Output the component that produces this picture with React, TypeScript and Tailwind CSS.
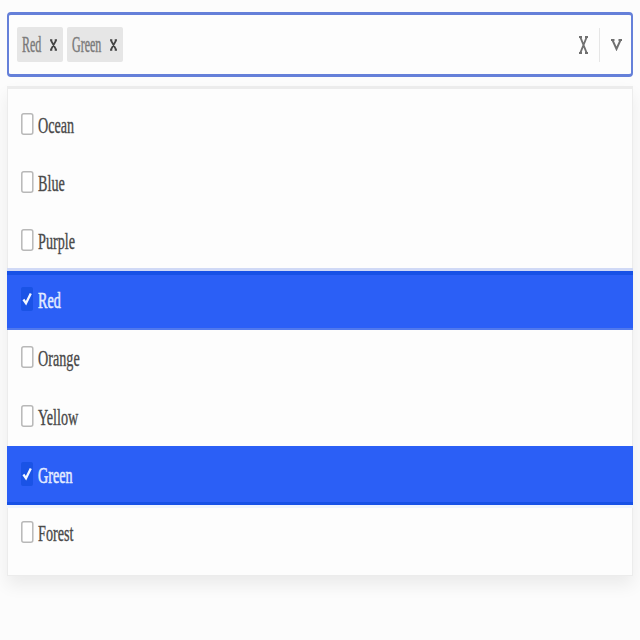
const options = ['Ocean', 'Blue', 'Purple', 'Red', 'Orange', 'Yellow', 'Green', 'Forest'];
const selected = ['Red', 'Green'];

const selectedEdges: Record<string, string> = {
  Red: 'shadow-[0_-3px_0_#d0d9f6,inset_0_4px_0_#1751e6,inset_0_-2px_0_#5179ed]',
  Green: 'shadow-[0_3px_0_#eef4ff,inset_0_-3px_0_#1751e6]',
};

function Chip({ label, width, textWidth }: { label: string; width: string; textWidth: string }) {
  return (
    <div className={`flex h-[35px] items-center rounded-[2px] bg-[#e6e6e6] pl-[5px] ${width}`}>
      <span className={`${textWidth} shrink-0`}>
        <span className="inline-block origin-left scale-x-50 whitespace-nowrap text-[24px] leading-[35px] text-[#707070] [-webkit-text-stroke:0.5px_#8a8a8a]">
          {label}
        </span>
      </span>
      <svg className="h-[12px] w-[7px] shrink-0" viewBox="0 0 7 12" fill="none" stroke="#444" strokeWidth="1.7">
        <path d="M1 1.5 6 10.5M6 1.5 1 10.5M0 1h2.3M4.7 1H7M0 11h2.3M4.7 11H7" />
      </svg>
    </div>
  );
}

function Checkbox({ checked }: { checked: boolean }) {
  if (checked) {
    return (
      <svg className="mb-[3px] h-[26px] w-[13px] shrink-0" viewBox="0 0 13 26">
        <rect x="0" y="1" width="12" height="24" rx="2" fill="#1a53e6" />
        <path d="M2.4 13.5 5 17.2 9.8 7.5" fill="none" stroke="#f2f6ff" strokeWidth="2.3" />
      </svg>
    );
  }
  return (
    <svg className="mb-[3px] h-[22px] w-[13px] shrink-0" viewBox="0 0 13 22">
      <rect x="0.8" y="0.8" width="11" height="20.4" rx="2" fill="#fff" stroke="#b8b8b8" strokeWidth="1.5" />
    </svg>
  );
}

export default function App() {
  return (
    <div className="h-[640px] w-[640px] overflow-hidden bg-[#fcfcfc] pl-[7px] pt-[12px] font-['Liberation_Serif',serif]">
      <div className="flex h-[65px] w-[626px] items-center rounded-[4px] border-x-2 border-y-[3px] border-[#6580d9] bg-[#fdfdfd] pl-[8px]">
        <div className="flex flex-1 gap-[4px]">
          <Chip label="Red" width="w-[46px]" textWidth="w-[28px]" />
          <Chip label="Green" width="w-[56px]" textWidth="w-[38px]" />
        </div>
        <svg className="h-[18px] w-[9px]" viewBox="0 0 9 18" fill="none" stroke="#707070" strokeWidth="1.9">
          <path d="M1.3 1 7.7 17M7.7 1 1.3 17M0 1h3M6 1h3M0 17h3M6 17h3" />
        </svg>
        <div className="ml-[11px] h-[34px] w-px bg-[#e6e6e6]" />
        <svg className="ml-[11px] mr-[9px] h-[12px] w-[11px]" viewBox="0 0 11 12" fill="none" stroke="#707070" strokeWidth="2">
          <path d="M1.5 1.2 5.5 10 9.5 1.2M0 1h3.5M7.5 1H11" />
        </svg>
      </div>
      <div className="mt-[9px] h-[490px] w-[626px] border border-t-[3px] border-[#ececec] bg-[#fdfdfd] pt-[7px] shadow-[0_9px_16px_rgba(0,0,0,0.07)]">
        {options.map((name) => {
          const checked = selected.includes(name);
          return (
            <div
              key={name}
              className={`-mx-px flex h-[58.4px] items-center pl-[14px] ${
                checked
                  ? 'bg-[#2b5ff6] text-[#e4ecff] [-webkit-text-stroke:0.6px_#e4ecff]'
                  : 'text-[#444] [-webkit-text-stroke:0.4px_#555]'
              } ${selectedEdges[name] ?? ''}`}
            >
              <Checkbox checked={checked} />
              <span className="mb-px ml-[4px] inline-block origin-left scale-x-[0.59] whitespace-nowrap text-[24px] leading-[28px]">
                {name}
              </span>
            </div>
          );
        })}
      </div>
    </div>
  );
}
